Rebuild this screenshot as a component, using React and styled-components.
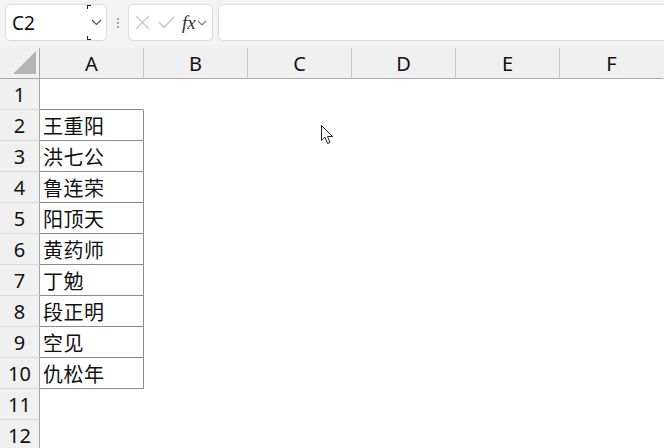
import React from "react";
import styled, { createGlobalStyle } from "styled-components";

const Global = createGlobalStyle`
  html, body { margin: 0; padding: 0; background: #fff; }
  body { width: 664px; height: 448px; overflow: hidden; font-family: "Noto Sans", "Noto Sans CJK SC", sans-serif; }
`;

const Page = styled.div`
  position: relative;
  width: 664px;
  height: 448px;
  overflow: hidden;
  background: #fff;
`;

const Toolbar = styled.div`
  height: 48px;
  box-sizing: border-box;
  background: #f3f3f3;
  display: flex;
  align-items: flex-start;
  padding: 4px 0 0 5px;
`;

const Box = styled.div`
  box-sizing: border-box;
  height: 37px;
  width: ${(p) => p.$w}px;
  background: #fff;
  border: 1px solid #dcdcdc;
  border-radius: 5px;
  display: flex;
  align-items: center;
  position: relative;
`;

const NameText = styled.span`
  font-family: "Noto Sans", sans-serif;
  font-size: 19px;
  color: #111;
  margin-left: 6px;
  flex: 1;
`;

const DropBtn = styled.div`
  position: relative;
  width: 19px;
  height: 35px;
  display: flex;
  align-items: center;
  justify-content: center;
`;

const Corner = styled.span`
  position: absolute;
  width: 3px;
  height: 3px;
  ${(p) => (p.$top ? "top: 0;" : "bottom: 0;")}
  left: 0;
  border-left: 1px solid #222;
  ${(p) => (p.$top ? "border-top: 1px solid #222;" : "border-bottom: 1px solid #222;")}
`;

const Dots = styled.div`
  width: 21px;
  height: 37px;
  display: flex;
  flex-direction: column;
  align-items: center;
  justify-content: center;
  gap: 2px;
  span { width: 2px; height: 2px; background: #8a8a8a; border-radius: 1px; }
`;

const FxBox = styled(Box)`
  padding-left: 6px;
  gap: 6px;
`;

const Formula = styled(Box)`
  margin-left: 5px;
  flex: 1;
  border-right: none;
  border-radius: 5px 0 0 5px;
`;

const Fx = styled.span`
  font-family: "Liberation Serif", serif;
  font-style: italic;
  font-size: 19px;
  color: #333;
  margin-left: 1px;
  line-height: 1;
`;

const Grid = styled.div`
  display: grid;
  grid-template-columns: 40px repeat(6, 104px);
  grid-auto-rows: 31px;
`;

const Head = styled.div`
  box-sizing: border-box;
  background: #f0f0f0;
  border-bottom: 1px solid #a6a6a6;
  border-right: 1px solid ${(p) => (p.$last ? "transparent" : "#c8c8c8")};
  display: flex;
  align-items: center;
  justify-content: center;
  font-family: "Noto Sans", sans-serif;
  font-size: 20px;
  color: #111;
  padding-top: 1px;
`;

const CornerCell = styled.div`
  box-sizing: border-box;
  background: #f0f0f0;
  border-bottom: 1px solid #a6a6a6;
  border-right: 1px solid #a6a6a6;
  display: flex;
  align-items: flex-end;
  justify-content: flex-end;
  padding: 0 3px 4px 0;
`;

const RowHead = styled.div`
  box-sizing: border-box;
  background: #f0f0f0;
  border-bottom: 1px solid #dadada;
  border-right: 1px solid #a6a6a6;
  display: flex;
  align-items: center;
  justify-content: center;
  font-family: "Noto Sans", sans-serif;
  font-size: 20px;
  color: #111;
`;

const Cell = styled.div`
  box-sizing: border-box;
  border-bottom: 1px solid ${(p) => (p.$bb ? "#8c8c8c" : "transparent")};
  border-right: 1px solid ${(p) => (p.$br ? "#8c8c8c" : "transparent")};
  display: flex;
  align-items: center;
  padding-left: 3px;
  font-family: "Noto Sans CJK SC", "Noto Sans", sans-serif;
  font-size: 20px;
  letter-spacing: 0.5px;
  color: #111;
`;

const Cursor = styled.svg`
  position: absolute;
  left: 321px;
  top: 125px;
`;

const names = ["", "王重阳", "洪七公", "鲁连荣", "阳顶天", "黄药师", "丁勉", "段正明", "空见", "仇松年", "", ""];
const cols = ["A", "B", "C", "D", "E", "F"];

export default function App() {
  return (
    <Page>
      <Global />
      <Toolbar>
        <Box $w={102}>
          <NameText>C2</NameText>
          <DropBtn>
            <Corner $top />
            <Corner />
            <svg width="11" height="7" viewBox="0 0 11 7">
              <path d="M1 1 L5.5 5.5 L10 1" fill="none" stroke="#555" strokeWidth="1.2" />
            </svg>
          </DropBtn>
        </Box>
        <Dots><span /><span /><span /></Dots>
        <FxBox $w={85}>
          <svg width="15" height="15" viewBox="0 0 15 15">
            <path d="M1 1 L14 14 M14 1 L1 14" stroke="#c4c4c4" strokeWidth="1.2" fill="none" />
          </svg>
          <svg width="17" height="13" viewBox="0 0 17 13" style={{ marginLeft: 2 }}>
            <path d="M1 6 L6 11.5 L16 1" stroke="#c4c4c4" strokeWidth="1.2" fill="none" />
          </svg>
          <Fx>fx</Fx>
          <svg width="10" height="6" viewBox="0 0 10 6" style={{ marginLeft: -5 }}>
            <path d="M1 1 L5 5 L9 1" fill="none" stroke="#777" strokeWidth="1.1" />
          </svg>
        </FxBox>
        <Formula />
      </Toolbar>
      <Grid>
        <CornerCell>
          <svg width="23" height="23" viewBox="0 0 23 23">
            <polygon points="23,0 23,23 0,23" fill="#b4b4b4" />
          </svg>
        </CornerCell>
        {cols.map((c, i) => (
          <Head key={c} $last={i === cols.length - 1}>{c}</Head>
        ))}
        {names.map((n, r) => (
          <React.Fragment key={r}>
            <RowHead>{r + 1}</RowHead>
            {cols.map((c, ci) => (
              <Cell key={c} $bb={ci === 0 && r <= 9} $br={ci === 0 && r >= 1 && r <= 9}>
                {ci === 0 ? n : ""}
              </Cell>
            ))}
          </React.Fragment>
        ))}
      </Grid>
      <Cursor width="13" height="20" viewBox="0 0 13 20">
        <path d="M0.5 0.5 L0.5 15.5 L4 12.2 L6.6 18.5 L9 17.5 L6.5 11.5 L11.5 11.5 Z" fill="#fff" stroke="#222" strokeWidth="1" strokeLinejoin="round" />
      </Cursor>
    </Page>
  );
}
